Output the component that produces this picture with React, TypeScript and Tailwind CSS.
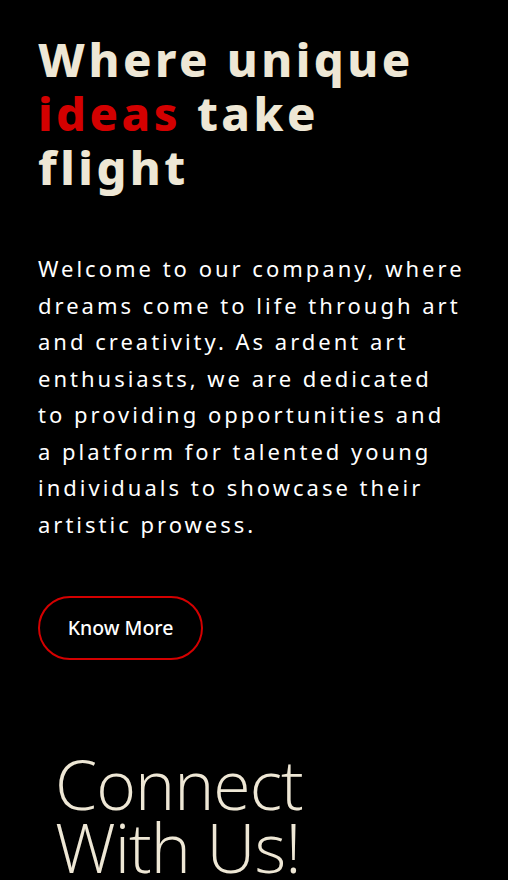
import React from "react";

export default function App() {
  return (
    <div className="min-h-[880px] w-full bg-black overflow-hidden">
      <section className="px-[38px] pt-[32px]">
        <h1
          className="max-w-[420px] text-[47px] leading-[54px] font-extrabold tracking-[3.5px] text-[#eee7d5]"
          style={{ fontFamily: '"Noto Sans", "Open Sans", sans-serif' }}
        >
          Where unique <span className="text-[#d40000]">ideas</span> take flight
        </h1>
        <p
          className="mt-[56px] text-[22px] leading-[36.5px] tracking-[3px] text-white"
          style={{ fontFamily: '"Noto Sans", "Open Sans", sans-serif' }}
        >
          Welcome to our company, where
          <br />
          dreams come to life through art
          <br />
          and creativity. As ardent art
          <br />
          enthusiasts, we are dedicated
          <br />
          to providing opportunities and
          <br />
          a platform for talented young
          <br />
          individuals to showcase their
          <br />
          artistic prowess.
        </p>
        <button
          className="mt-[54px] flex h-[64px] w-[165px] items-center justify-center rounded-full border-[2.5px] border-[#d40000] text-[19.5px] font-medium text-white"
          style={{ fontFamily: '"Noto Sans", "Open Sans", sans-serif' }}
        >
          Know More
        </button>
      </section>
      <section className="px-[55px] pt-[92px]">
        <h2
          className="text-[68px] leading-[63px] font-light tracking-[-1px] text-[#eee7d5]"
          style={{ fontFamily: '"Open Sans", "Noto Sans", sans-serif' }}
        >
          Connect
          <br />
          With Us!
        </h2>
      </section>
    </div>
  );
}
